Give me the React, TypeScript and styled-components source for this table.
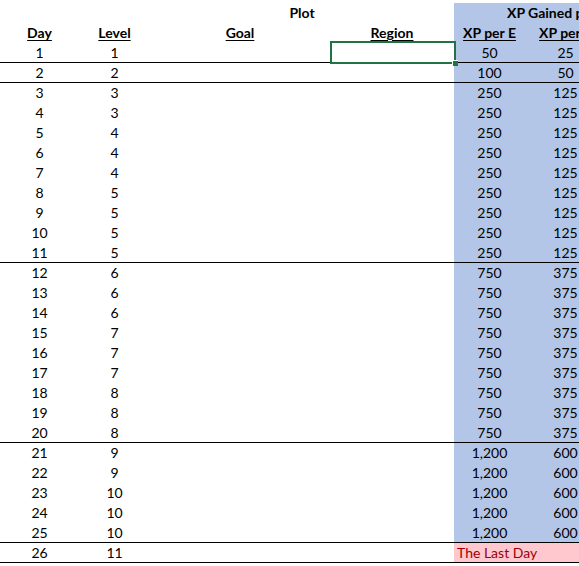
import React from "react";
import styled, { createGlobalStyle, css } from "styled-components";

const Global = createGlobalStyle`
  html, body { margin: 0; padding: 0; background: #fff; overflow: hidden; }
  body { font-family: Lato, "Liberation Sans", sans-serif; }
`;

const Sheet = styled.div`
  padding-top: 3px;
  width: 606px;
  color: #000;
  font-size: 14px;
`;

const Row = styled.div<{ $rule?: boolean }>`
  display: grid;
  grid-template-columns: 79px 71px 180px 124px 71px 81px;
  height: 20px;
  line-height: 20px;
  ${(p) =>
    p.$rule &&
    css`
      & > * {
        box-shadow: inset 0 -1px 0 #000;
      }
    `}
`;

const Cell = styled.div<{ $span?: number; $tone?: "blue" | "bad"; $align?: "left" | "center" }>`
  grid-column: span ${(p) => p.$span ?? 1};
  text-align: ${(p) => p.$align ?? "center"};
  white-space: nowrap;
  overflow: hidden;
  position: relative;
  ${(p) => p.$tone === "blue" && css`background: #b4c6e7;`}
  ${(p) =>
    p.$tone === "bad" &&
    css`
      background: #ffc7ce;
      color: #9c0006;
      padding-left: 3px;
    `}
`;

const Title = styled(Cell)`
  font-weight: 700;
`;

const Heading = styled(Cell)`
  font-weight: 700;
  text-decoration: underline;
  text-decoration-thickness: 1px;
  text-underline-offset: 2px;
`;

const SpillTitle = styled(Title)`
  text-align: left;
  padding-left: 53px;
`;

const Selected = styled(Cell)`
  overflow: visible;
  z-index: 2;
  &::before {
    content: "";
    position: absolute;
    top: -2px;
    left: 0;
    right: -2px;
    bottom: -1px;
    border: 2px solid #217346;
  }
  &::after {
    content: "";
    position: absolute;
    right: -4px;
    bottom: -3px;
    width: 5px;
    height: 5px;
    background: #217346;
    border: 1px solid #fff;
    border-right: none;
    border-bottom: none;
  }
`;

type Data = { day: number; level: number; a: string; b: string; rule?: boolean };

const levels = [1, 2, 3, 3, 4, 4, 4, 5, 5, 5, 5, 6, 6, 6, 7, 7, 7, 8, 8, 8, 9, 9, 10, 10, 10];
const rules = new Set([1, 2, 11, 20, 25]);

const xpFor = (day: number): [string, string] => {
  if (day === 1) return ["50", "25"];
  if (day === 2) return ["100", "50"];
  if (day <= 11) return ["250", "125"];
  if (day <= 20) return ["750", "375"];
  return ["1,200", "600"];
};

const rows: Data[] = levels.map((level, i) => {
  const day = i + 1;
  const [a, b] = xpFor(day);
  return { day, level, a, b, rule: rules.has(day) };
});

export default function App() {
  return (
    <>
      <Global />
      <Sheet>
        <Row>
          <Cell />
          <Cell />
          <Title $span={2}>Plot</Title>
          <SpillTitle $span={2} $tone="blue">XP Gained per Day</SpillTitle>
        </Row>
        <Row>
          <Heading>Day</Heading>
          <Heading>Level</Heading>
          <Heading>Goal</Heading>
          <Heading>Region</Heading>
          <Heading $tone="blue">XP per E</Heading>
          <Heading $tone="blue">XP per E</Heading>
        </Row>
        {rows.map((r) => (
          <Row key={r.day} $rule={r.rule}>
            <Cell>{r.day}</Cell>
            <Cell>{r.level}</Cell>
            <Cell />
            {r.day === 1 ? <Selected /> : <Cell />}
            <Cell $tone="blue">{r.a}</Cell>
            <Cell $tone="blue">{r.b}</Cell>
          </Row>
        ))}
        <Row $rule>
          <Cell>26</Cell>
          <Cell>11</Cell>
          <Cell />
          <Cell />
          <Cell $span={2} $tone="bad" $align="left">The Last Day</Cell>
        </Row>
      </Sheet>
    </>
  );
}
